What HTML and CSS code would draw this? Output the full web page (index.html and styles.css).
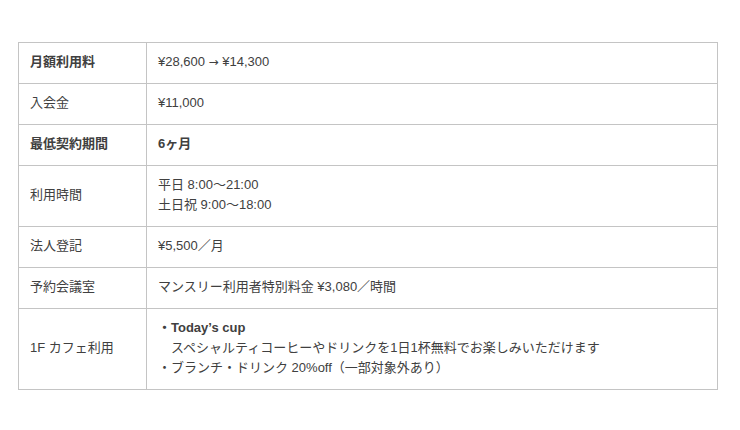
FILE: index.html
```html
<!DOCTYPE html>
<html lang="ja">
<head>
<meta charset="utf-8">
<link rel="stylesheet" href="styles.css">
</head>
<body>
<table class="plan">
  <tr><th class="bold">月額利用料</th><td>¥28,600 <span class="arrow">→</span> ¥14,300</td></tr>
  <tr><th>入会金</th><td>¥11,000</td></tr>
  <tr><th class="bold">最低契約期間</th><td class="bold">6ヶ月</td></tr>
  <tr><th>利用時間</th><td>平日 8:00〜21:00<br>土日祝 9:00〜18:00</td></tr>
  <tr><th>法人登記</th><td>¥5,500／月</td></tr>
  <tr><th>予約会議室</th><td>マンスリー利用者特別料金 ¥3,080／時間</td></tr>
  <tr><th>1F カフェ利用</th><td><span class="bold">・Today’s cup</span><br>　スペシャルティコーヒーやドリンクを1日1杯無料でお楽しみいただけます<br>・ブランチ・ドリンク 20%off（一部対象外あり）</td></tr>
</table>
</body>
</html>
```
FILE: styles.css
```css
html, body {
  margin: 0;
  background: #fff;
}
body {
  padding: 42px 22px 0 18px;
  font-family: "Liberation Sans", "Noto Sans CJK JP", sans-serif;
  font-size: 13px;
  color: #404040;
}
.plan {
  width: 700px;
  border-collapse: collapse;
}
.plan th, .plan td {
  border: 1px solid #c4c4c4;
  padding: 9px 11px 11px 11px;
  line-height: 20px;
  text-align: left;
  vertical-align: middle;
  font-weight: normal;
}
.plan th {
  width: 105px;
}
.plan .bold {
  font-weight: bold;
}
.arrow {
  font-family: "DejaVu Sans", sans-serif;
  font-size: 12px;
}
```
